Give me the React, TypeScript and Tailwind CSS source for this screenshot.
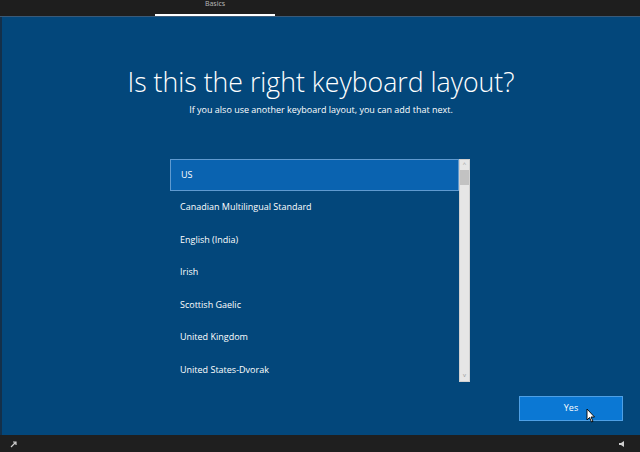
import React from "react";

const items = [
  "US",
  "Canadian Multilingual Standard",
  "English (India)",
  "Irish",
  "Scottish Gaelic",
  "United Kingdom",
  "United States-Dvorak",
];

export default function App() {
  return (
    <div
      className="w-[640px] h-[452px] flex flex-col bg-[#1c1c1c] overflow-hidden"
      style={{ fontFamily: '"Open Sans", "Noto Sans", sans-serif' }}
    >
      {/* top bar */}
      <div className="h-[17px] shrink-0 relative bg-[#1e1e1e] border-b border-[#3a5a78]">
        <div className="absolute left-[155px] w-[120px] top-[0px] leading-none text-center text-[7px] text-[#bbbbbb]">Basics</div>
        <div className="absolute left-[155px] w-[120px] top-[14px] h-[2px] bg-white" />
      </div>

      {/* main */}
      <div className="flex-1 bg-[#03477b] border-l-2 border-[#14304a] flex flex-col items-center">
        <h1 className="mt-[52px] text-[26.7px] font-light text-white leading-none">
          Is this the right keyboard layout?
        </h1>
        <p className="mt-[9px] text-[9px] text-white leading-none">
          If you also use another keyboard layout, you can add that next.
        </p>

        <div className="mt-[45px] w-[300px] h-[223px] flex -ml-[2px]">
          <div className="flex-1 flex flex-col">
            {items.map((it, i) => (
              <div
                key={it}
                className={
                  i === 0
                    ? "h-[32px] shrink-0 flex items-center pl-[10px] text-[9px] text-white bg-[#0a63b0] border border-[#5f9ad0]"
                    : "h-[32.5px] shrink-0 flex items-center pl-[10px] text-[9px] text-white"
                }
              >
                {it}
              </div>
            ))}
          </div>
          <div className="w-[11px] bg-[#e6e6e6] flex flex-col items-center border border-[#d0d0d0]">
            <div className="h-[10px] flex items-center justify-center text-[6px] text-[#999]">^</div>
            <div className="w-[9px] h-[15px] bg-[#c2c2c2]" />
            <div className="flex-1" />
            <div className="h-[10px] flex items-center justify-center text-[6px] text-[#999]">v</div>
          </div>
        </div>

        <div className="w-full flex justify-end pr-[17px] mt-[14px]">
          <div className="relative w-[104px] h-[25px] bg-[#0b78d4] border border-[#4ea0e6] flex items-center justify-center text-[9px] text-white">
            Yes
            <svg className="absolute left-[66px] top-[11px]" width="10" height="15" viewBox="0 0 10 15">
              <path d="M1 1 L1 12 L3.5 9.5 L5.5 14 L7 13.3 L5 9 L8.5 9 Z" fill="white" stroke="black" strokeWidth="0.9" />
            </svg>
          </div>
        </div>
      </div>

      {/* bottom bar */}
      <div className="h-[17px] shrink-0 bg-[#1f1f1f] relative">
        <svg className="absolute left-[10px] top-[5px]" width="8" height="8" viewBox="0 0 8 8">
          <path d="M1 7 L6 2 M3 2 L6 2 L6 5" stroke="#cfcfcf" strokeWidth="1.2" fill="none" />
        </svg>
        <svg className="absolute left-[618px] top-[5px]" width="10" height="8" viewBox="0 0 10 8">
          <path d="M1 3 L3 3 L6 1 L6 7 L3 5 L1 5 Z" fill="#cfcfcf" />
        </svg>
      </div>
    </div>
  );
}
